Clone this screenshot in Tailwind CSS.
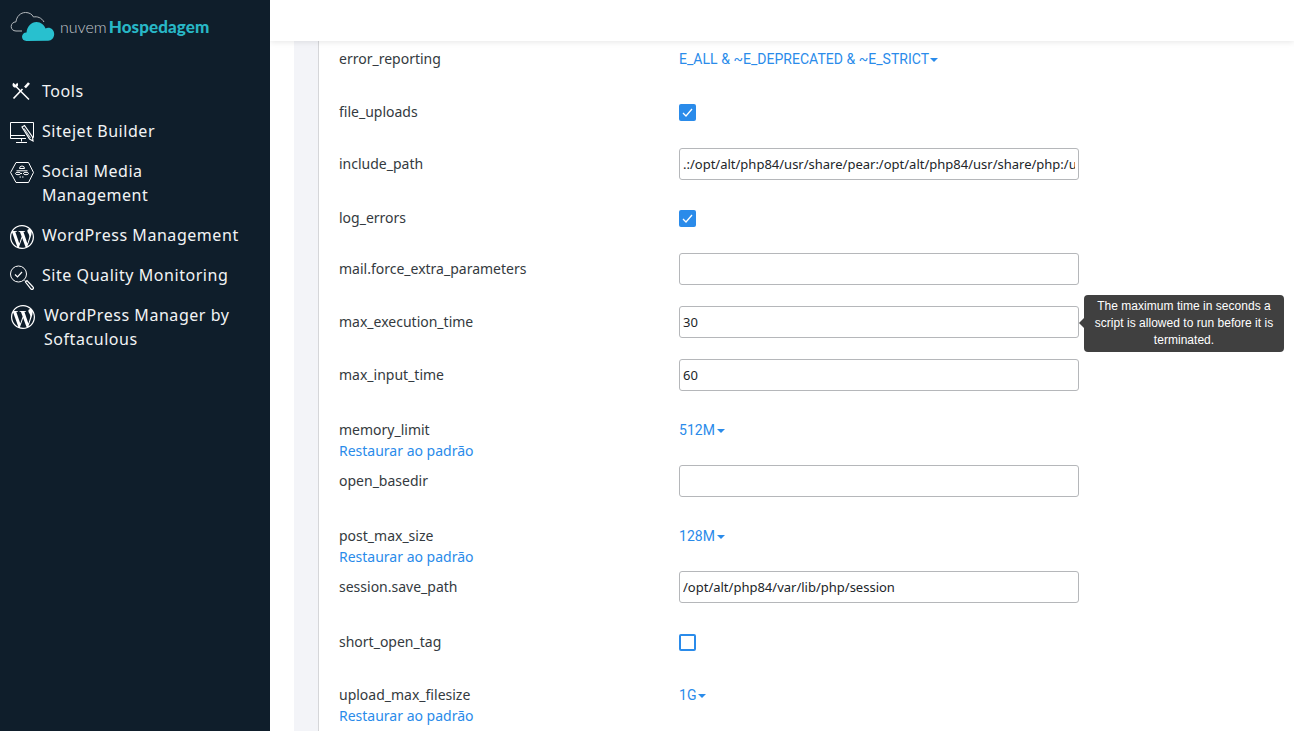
<!DOCTYPE html>
<html lang="pt">
<head>
  <meta charset="UTF-8">
  <title>MultiPHP INI Editor</title>
  <script src="https://cdn.jsdelivr.net/npm/@tailwindcss/browser@4"></script>
</head>
<body class="h-[731px] overflow-hidden bg-white font-['Noto_Sans',sans-serif]">
  <div class="flex h-[731px]">
    <!-- sidebar -->
    <aside class="w-[270px] shrink-0 bg-[#0f1e2b] text-white">
      <div class="flex h-[46px] items-center pl-[10px] pt-[8px]">
        <svg width="50" height="32" viewBox="0 0 50 32" fill="none">
          <path d="M12 20H6C3 20 1.200 18 1.200 15.500 1.200 12.800 3.200 11 6 10.800 6.500 5.500 10.500 1.500 15.500 1.500c3.500 0 6.500 1.500 8 4.500 3.500-0.800 8 0.500 10.500 5" stroke="#b4b9bd" stroke-width="1"/>
          <path d="M16.500 30C13.500 30 12 28 12 25.800c0-2.300 1.800-4.300 4.500-4.300 0.600-6 4.800-10.500 10-10.500 4.500 0 7.800 3 9 6.500 1-0.600 1.800-0.700 2.700-0.700 3.300 0 6 2.700 6 6.300 0 3.700-2.500 6.700-6 6.700z" fill="#28c0cf"/>
        </svg>
        <span class="font-['Lato',sans-serif] text-[16px] font-light text-[#c3c8cc]">nuvem</span><span class="ml-[2px] font-['Lato',sans-serif] text-[17px] font-black tracking-[0.1px] text-[#28b7c6]">Hospedagem</span>
      </div>
      <nav class="mt-[25px] text-[16px] leading-[24px] tracking-[0.55px] text-[#f2f4f5]">
        <a class="flex h-[40px] items-start pl-[10px] pt-[8px]">
          <svg class="mt-[1px] mr-[10px] shrink-0" width="22" height="22" viewBox="0 0 22 22" fill="none" stroke="#fff">
            <path d="M5.500 6L19 19.500" stroke-width="1.500"/>
            <path d="M3.500 2.800C2 4 2.200 6.300 3.800 7.200 5.500 8 7.500 7 8 5.500 8.300 4.400 7.900 3.400 7.200 2.700L5.500 4.800z" fill="#fff" stroke="none"/>
            <path d="M12.500 9L3.500 18.500" stroke-width="1.700"/>
            <path d="M15 7.500L19 3" stroke-width="2.600"/>
          </svg>
          Tools
        </a>
        <a class="flex h-[40px] items-start pl-[10px] pt-[8px]">
          <svg class="mt-[1px] mr-[8px] shrink-0" width="24" height="24" viewBox="0 0 24 24" fill="none" stroke="#fff" stroke-width="1">
            <path d="M19 17.500h4.500V2.500H.5v16H16"/>
            <path d="M.5 15.500H15M11.500 18.500v3M6 22.500h11"/>
            <path d="M12 7l2.500-1.500 8 11.500 .5 4-3.500-2z" fill="#0f1e2b" stroke-width="1.200"/>
            <path d="M14 8.500l6.500 9.500" stroke="#cfd3d6" stroke-width="1.200"/>
          </svg>
          Sitejet Builder
        </a>
        <a class="flex h-[64px] items-start pl-[10px] pt-[8px]">
          <svg class="mt-[1px] mr-[8px] shrink-0" width="24" height="24" viewBox="0 0 24 24" fill="none" stroke="#fff" stroke-width="1">
            <path d="M6 2.500h12.500L23.500 12.500 18.500 22.500H6L.6 12.500z"/>
            <path d="M9.500 8.500a2.500 2.500 0 0 1 5 0zM6.500 10.800h11"/>
            <ellipse cx="8" cy="13.500" rx="2.500" ry="1.200"/>
            <ellipse cx="16" cy="13.500" rx="2.500" ry="1.200"/>
            <path d="M10.500 13.500h3M9.500 17h5" stroke-dasharray="1.500 1"/>
          </svg>
          <span class="w-[160px]">Social Media Management</span>
        </a>
        <a class="flex h-[40px] items-start pl-[10px] pt-[8px]">
          <svg class="mt-[2px] mr-[8px] shrink-0" width="24" height="24" viewBox="0 0 24 24" fill="#fff">
            <path d="M21.469 6.825c.84 1.537 1.318 3.3 1.318 5.175 0 3.979-2.156 7.456-5.363 9.325l3.295-9.527c.615-1.54.82-2.771.82-3.864 0-.405-.026-.78-.07-1.11m-7.981.105c.647-.03 1.232-.105 1.232-.105.582-.075.514-.93-.067-.899 0 0-1.755.135-2.88.135-1.064 0-2.85-.15-2.85-.15-.585-.03-.661.855-.075.885 0 0 .54.061 1.125.09l1.68 4.605-2.37 7.08L5.354 6.9c.649-.03 1.234-.1 1.234-.1.585-.075.516-.93-.065-.896 0 0-1.746.138-2.874.138-.2 0-.438-.008-.69-.015C4.911 3.15 8.235 1.215 12 1.215c2.809 0 5.365 1.072 7.286 2.833-.046-.003-.091-.009-.141-.009-1.06 0-1.812.923-1.812 1.914 0 .89.513 1.643 1.06 2.531.411.72.89 1.643.89 2.977 0 .915-.354 1.994-.821 3.479l-1.075 3.585-3.9-11.61.001.014zM12 22.784c-1.059 0-2.081-.153-3.048-.437l3.237-9.406 3.315 9.087c.024.053.05.101.078.149-1.12.393-2.325.609-3.582.609M1.211 12c0-1.564.336-3.05.935-4.39L7.29 21.709C3.694 19.96 1.212 16.271 1.211 12M12 0C5.385 0 0 5.385 0 12s5.385 12 12 12 12-5.385 12-12S18.615 0 12 0"/>
          </svg>
          WordPress Management
        </a>
        <a class="flex h-[40px] items-start pl-[10px] pt-[8px]">
          <svg class="mt-[1px] mr-[8px] shrink-0" width="24" height="26" viewBox="0 0 24 26" fill="none" stroke="#fff" stroke-width="1">
            <circle cx="8.500" cy="10" r="8"/>
            <path d="M5 10.500l2.500 2.500 4.500-5" stroke-width="1.200"/>
            <path d="M14.500 16.500l1.500 1"/>
            <path d="M15.500 18l1.500-1.500 6 6.500a1.400 1.400 0 0 1-2 2z" stroke-width="1.200"/>
          </svg>
          Site Quality Monitoring
        </a>
        <a class="flex h-[64px] items-start pl-[11px] pt-[8px]">
          <svg class="mt-[2px] mr-[9px] shrink-0" width="24" height="24" viewBox="0 0 24 24" fill="#fff">
            <path d="M21.469 6.825c.84 1.537 1.318 3.3 1.318 5.175 0 3.979-2.156 7.456-5.363 9.325l3.295-9.527c.615-1.54.82-2.771.82-3.864 0-.405-.026-.78-.07-1.11m-7.981.105c.647-.03 1.232-.105 1.232-.105.582-.075.514-.93-.067-.899 0 0-1.755.135-2.88.135-1.064 0-2.85-.15-2.85-.15-.585-.03-.661.855-.075.885 0 0 .54.061 1.125.09l1.68 4.605-2.37 7.08L5.354 6.9c.649-.03 1.234-.1 1.234-.1.585-.075.516-.93-.065-.896 0 0-1.746.138-2.874.138-.2 0-.438-.008-.69-.015C4.911 3.15 8.235 1.215 12 1.215c2.809 0 5.365 1.072 7.286 2.833-.046-.003-.091-.009-.141-.009-1.06 0-1.812.923-1.812 1.914 0 .89.513 1.643 1.06 2.531.411.72.89 1.643.89 2.977 0 .915-.354 1.994-.821 3.479l-1.075 3.585-3.9-11.61.001.014zM12 22.784c-1.059 0-2.081-.153-3.048-.437l3.237-9.406 3.315 9.087c.024.053.05.101.078.149-1.12.393-2.325.609-3.582.609M1.211 12c0-1.564.336-3.05.935-4.39L7.29 21.709C3.694 19.96 1.212 16.271 1.211 12M12 0C5.385 0 0 5.385 0 12s5.385 12 12 12 12-5.385 12-12S18.615 0 12 0"/>
          </svg>
          <span class="w-[200px]">WordPress Manager by Softaculous</span>
        </a>
      </nav>
    </aside>

    <!-- main -->
    <main class="relative flex-1 overflow-hidden">
      <header class="relative z-10 h-[41px] bg-white shadow-[0_1px_6px_rgba(0,0,0,0.1)]"></header>
      <div class="ml-[24px] h-full bg-[#f3f4f8] pl-[24px]">
        <div class="h-full border-l border-[#d5d6d9] bg-white pt-px pl-[20px] text-[14px] text-[#343a40]">

          <div class="flex h-[53px] pt-[6px]">
            <div class="w-[340px] leading-[21px]">error_reporting</div>
            <a class="mt-px font-['Roboto',sans-serif] leading-[21px] tracking-[0.03px] text-[#2a8bea]">E_ALL &amp; ~E_DEPRECATED &amp; ~E_STRICT<span class="ml-[1px] inline-block border-x-[4.500px] border-t-[4px] border-x-transparent border-t-[#2a8bea] align-middle"></span></a>
          </div>

          <div class="flex h-[53px] items-start pt-[6px]">
            <div class="w-[340px] leading-[21px]">file_uploads</div>
            <span class="mt-[3px] flex h-[17px] w-[17px] items-center justify-center rounded-[2px] bg-[#2a8bea]">
              <svg width="13" height="13" viewBox="0 0 13 13" fill="none" stroke="#fff" stroke-width="1.300"><path d="M2 7l3 3 6-7"/></svg>
            </span>
          </div>

          <div class="flex h-[53px]">
            <div class="w-[340px] pt-[5px] leading-[21px]">include_path</div>
            <input class="h-[32px] w-[400px] rounded-[3px] border border-[#b5b7ba] bg-white px-[3px] text-[13px] text-[#212529]" value=".:/opt/alt/php84/usr/share/pear:/opt/alt/php84/usr/share/php:/usr/share/pear:/usr/share/php">
          </div>

          <div class="flex h-[52px] items-start pt-[6px]">
            <div class="w-[340px] leading-[21px]">log_errors</div>
            <span class="mt-[3px] flex h-[17px] w-[17px] items-center justify-center rounded-[2px] bg-[#2a8bea]">
              <svg width="13" height="13" viewBox="0 0 13 13" fill="none" stroke="#fff" stroke-width="1.300"><path d="M2 7l3 3 6-7"/></svg>
            </span>
          </div>

          <div class="flex h-[53px]">
            <div class="w-[340px] pt-[5px] leading-[21px]">mail.force_extra_parameters</div>
            <input class="h-[32px] w-[400px] rounded-[3px] border border-[#b5b7ba] bg-white px-[3px] text-[13px] text-[#212529]" value="">
          </div>

          <div class="flex h-[53px]">
            <div class="w-[340px] pt-[5px] leading-[21px]">max_execution_time</div>
            <input class="h-[32px] w-[400px] rounded-[3px] border border-[#b5b7ba] bg-white px-[3px] text-[13px] text-[#212529]" value="30">
          </div>

          <div class="flex h-[53px]">
            <div class="w-[340px] pt-[5px] leading-[21px]">max_input_time</div>
            <input class="h-[32px] w-[400px] rounded-[3px] border border-[#b5b7ba] bg-white px-[3px] text-[13px] text-[#212529]" value="60">
          </div>

          <div class="flex h-[53px] pt-[7px]">
            <div class="w-[340px] leading-[21px]">memory_limit<a class="block text-[#2a8bea]">Restaurar ao padrão</a></div>
            <a class="mt-px font-['Roboto',sans-serif] leading-[21px] tracking-[0.03px] text-[#2a8bea]">512M<span class="ml-[2px] inline-block border-x-[4.500px] border-t-[4px] border-x-transparent border-t-[#2a8bea] align-middle"></span></a>
          </div>

          <div class="flex h-[53px]">
            <div class="w-[340px] pt-[5px] leading-[21px]">open_basedir</div>
            <input class="h-[32px] w-[400px] rounded-[3px] border border-[#b5b7ba] bg-white px-[3px] text-[13px] text-[#212529]" value="">
          </div>

          <div class="flex h-[53px] pt-[7px]">
            <div class="w-[340px] leading-[21px]">post_max_size<a class="block text-[#2a8bea]">Restaurar ao padrão</a></div>
            <a class="mt-px font-['Roboto',sans-serif] leading-[21px] tracking-[0.03px] text-[#2a8bea]">128M<span class="ml-[2px] inline-block border-x-[4.500px] border-t-[4px] border-x-transparent border-t-[#2a8bea] align-middle"></span></a>
          </div>

          <div class="flex h-[53px]">
            <div class="w-[340px] pt-[5px] leading-[21px]">session.save_path</div>
            <input class="h-[32px] w-[400px] rounded-[3px] border border-[#b5b7ba] bg-white px-[3px] text-[13px] text-[#212529]" value="/opt/alt/php84/var/lib/php/session">
          </div>

          <div class="flex h-[53px] items-start pt-[7px]">
            <div class="w-[340px] leading-[21px]">short_open_tag</div>
            <span class="mt-[3px] h-[17px] w-[17px] rounded-[2px] border-2 border-[#2a8bea] bg-white"></span>
          </div>

          <div class="flex h-[53px] pt-[7px]">
            <div class="w-[340px] leading-[21px]">upload_max_filesize<a class="block text-[#2a8bea]">Restaurar ao padrão</a></div>
            <a class="mt-px font-['Roboto',sans-serif] leading-[21px] tracking-[0.03px] text-[#2a8bea]">1G<span class="ml-[2px] inline-block border-x-[4.500px] border-t-[4px] border-x-transparent border-t-[#2a8bea] align-middle"></span></a>
          </div>
        </div>
      </div>

      <!-- tooltip -->
      <div class="absolute top-[295px] left-[814px] w-[200px] rounded-[4px] bg-[#404040] px-[5px] py-[3px] text-center font-['Liberation_Sans',sans-serif] text-[12px] leading-[17px] tracking-[0.03px] text-white">
        <span class="absolute top-[23px] -left-[5px] border-y-[5px] border-r-[5px] border-y-transparent border-r-[#404040]"></span>
        The maximum time in seconds a script is allowed to run before it is terminated.
      </div>
    </main>
  </div>
</body>
</html>
